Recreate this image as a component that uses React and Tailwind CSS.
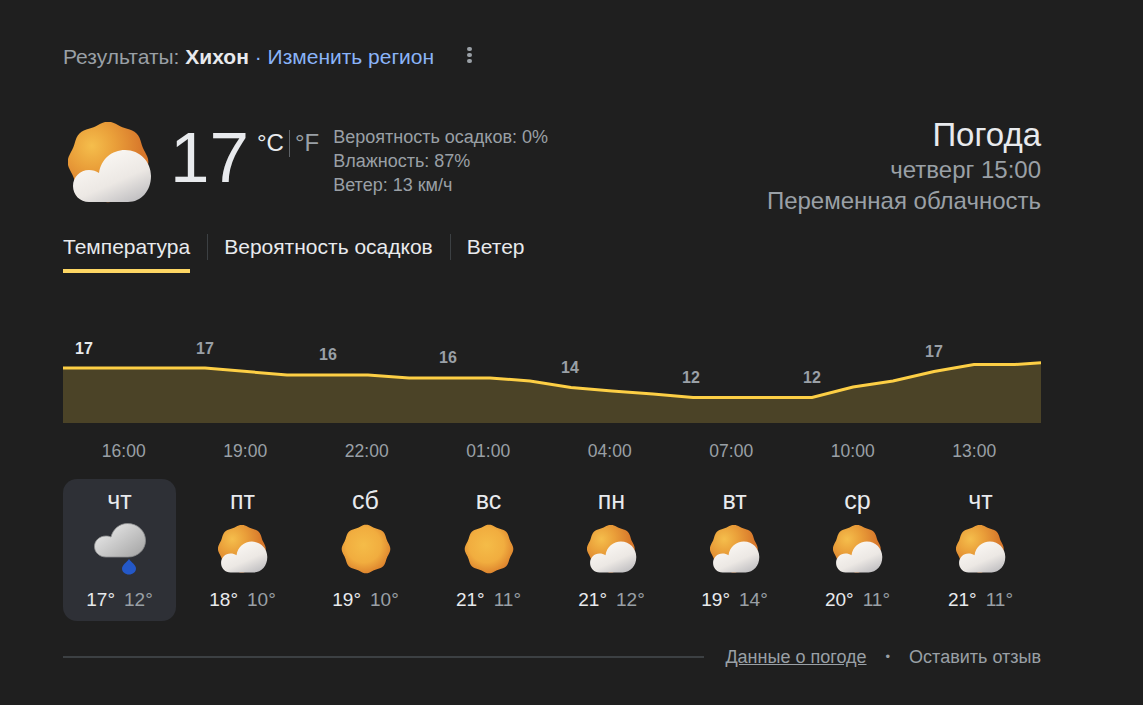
import React from 'react';

const chartPoints = [
  [0, 368], [142, 368], [224, 375], [305, 375], [346, 378], [427, 378], [467, 381], [508, 387.5],
  [549, 391], [590, 394], [630, 397.5], [749, 397.5], [790, 387], [830, 381], [871, 371.5],
  [911, 364.5], [952, 364.5], [978, 362.7],
];

const chartLabels = [
  [21, 354, '17', true], [142, 354, '17'], [265, 360, '16'], [385, 363, '16'],
  [507, 373, '14'], [628, 383, '12'], [749, 383, '12'], [871, 357, '17'],
];

const hours = ['16:00', '19:00', '22:00', '01:00', '04:00', '07:00', '10:00', '13:00'];

const days = [
  { name: 'чт', icon: 'rain', hi: 17, lo: 12, active: true },
  { name: 'пт', icon: 'partly', hi: 18, lo: 10 },
  { name: 'сб', icon: 'sun', hi: 19, lo: 10 },
  { name: 'вс', icon: 'sun', hi: 21, lo: 11 },
  { name: 'пн', icon: 'partly', hi: 21, lo: 12 },
  { name: 'вт', icon: 'partly', hi: 19, lo: 14 },
  { name: 'ср', icon: 'partly', hi: 20, lo: 11 },
  { name: 'чт', icon: 'partly', hi: 21, lo: 11 },
];

// bumpy sun outline, 8 lobes
function sunPath(cx, cy, r) {
  const pts = [];
  for (let i = 0; i < 96; i++) {
    const a = (i / 96) * Math.PI * 2;
    const rr = r * (1 + 0.035 * Math.cos(a * 8));
    pts.push(`${(cx + rr * Math.sin(a)).toFixed(2)} ${(cy - rr * Math.cos(a)).toFixed(2)}`);
  }
  return 'M' + pts.join('L') + 'Z';
}

function PartlyCloudy({ id, className }) {
  return (
    <svg viewBox="0 0 84 81" className={className}>
      <defs>
        <radialGradient id={`${id}s`} cx="0.3" cy="0.3" r="0.62">
          <stop offset="0" stopColor="#f5be4c" />
          <stop offset="0.45" stopColor="#eaa03a" />
          <stop offset="1" stopColor="#d8782b" />
        </radialGradient>
        <linearGradient id={`${id}c`} x1="0.25" y1="0.1" x2="0.85" y2="1">
          <stop offset="0" stopColor="#fbf8f4" />
          <stop offset="0.55" stopColor="#ece8e4" />
          <stop offset="1" stopColor="#bdbcbf" />
        </linearGradient>
      </defs>
      <path d={sunPath(40, 40, 39)} fill={`url(#${id}s)`} />
      <path
        d="M21 80C12 80 5 73 5 64C5 55 12 48 21 48C25 48 28 49 31 51C33 37 44 28 57 28C72 28 83 40 83 54C83 69 73 80 60 80Z"
        fill={`url(#${id}c)`}
      />
    </svg>
  );
}

function Sun({ id, className }) {
  return (
    <svg viewBox="0 0 50 50" className={className}>
      <defs>
        <radialGradient id={id} cx="0.45" cy="0.42" r="0.6">
          <stop offset="0" stopColor="#f5bc48" />
          <stop offset="0.6" stopColor="#f1ad3f" />
          <stop offset="1" stopColor="#dc812c" />
        </radialGradient>
      </defs>
      <path d={sunPath(25, 25, 23.5)} fill={`url(#${id})`} />
    </svg>
  );
}

function RainCloud({ id, className }) {
  return (
    <svg viewBox="0 0 52 52" className={className}>
      <defs>
        <linearGradient id={id} x1="0.1" y1="0.2" x2="0.9" y2="0.9">
          <stop offset="0" stopColor="#e6e6e6" />
          <stop offset="1" stopColor="#a9a9a9" />
        </linearGradient>
      </defs>
      <path
        d="M12 34C5.500 34 0.500 29.500 0.500 23.500C0.500 17.500 5.500 13 12 13C14 13 15.500 13.300 17 14C19 6 25.500 0.500 33.500 0.500C43.500 0.500 51.500 8 51.500 17.500C51.500 27 43.500 34 34 34Z"
        fill={`url(#${id})`}
        stroke="#8f9092"
        strokeWidth="0.8"
      />
      <path d="M35 36C37 39 42 42 42 45.500C42 49 38.800 51.500 35 51.500C31.200 51.500 28 49 28 45.500C28 42 33 39 35 36Z" fill="#2458c8" />
    </svg>
  );
}

function DayIcon({ type, id }) {
  if (type === 'rain') return <RainCloud id={id} className="w-[52px] h-[52px]" />;
  if (type === 'sun') return <Sun id={id} className="w-[50px] h-[50px]" />;
  return <PartlyCloudy id={id} className="w-[50px] h-[48px]" />;
}

function Chart() {
  const line = chartPoints.map((p) => p.join(' ')).join('L');
  return (
    <svg viewBox="0 325 978 98" className="block w-[978px] h-[98px]">
      <path d={`M${line}L978 423L0 423Z`} fill="#4b4327" />
      <path d={`M${line}`} fill="none" stroke="#fdcf45" strokeWidth="3" />
      {chartLabels.map(([x, y, t, on]) => (
        <text key={x} x={x} y={y} textAnchor="middle" fontSize="16" fontWeight="700" fill={on ? '#e8eaed' : '#9aa0a6'}>
          {t}
        </text>
      ))}
    </svg>
  );
}

export default function App() {
  return (
    <div className="min-h-[705px] bg-[#1f1f1f] pl-[63px] pt-[44px] font-['Liberation_Sans',Arial,sans-serif] text-[#e8eaed]">
      <div className="w-[978px]">
        {/* location line */}
        <div className="flex items-center h-[26px] text-[21px] leading-[26px] text-[#9aa0a6]">
          <span>Результаты:&nbsp;</span>
          <span className="font-bold text-[#e8eaed]">Хихон</span>
          <span className="text-[#8ab4f8]">&nbsp;· Изменить регион</span>
          <span className="ml-[33px] mb-[4px] flex flex-col gap-[1.500px]">
            <span className="w-[4.500px] h-[4.500px] rounded-full bg-[#9aa0a6]"></span>
            <span className="w-[4.500px] h-[4.500px] rounded-full bg-[#9aa0a6]"></span>
            <span className="w-[4.500px] h-[4.500px] rounded-full bg-[#9aa0a6]"></span>
          </span>
        </div>

        {/* current conditions */}
        <div className="flex justify-between mt-[52px] h-[88px]">
          <div className="flex items-start">
            <PartlyCloudy id="main" className="ml-[5px] w-[84px] h-[81px]" />
            <div className="ml-[18px] mt-[-8px] text-[71px] leading-[88px] w-[87px]">17</div>
            <div className="flex items-center h-[28px] mt-[7px] text-[24px] leading-[28px]">
              <span>°C</span>
              <span className="mx-[5px] w-px h-[27px] bg-[#5f6368]"></span>
              <span className="text-[#9aa0a6]">°F</span>
            </div>
            <div className="ml-[14px] mt-[3px] text-[18px] leading-[24px] text-[#9aa0a6]">
              <div>Вероятность осадков: 0%</div>
              <div>Влажность: 87%</div>
              <div>Ветер: 13 км/ч</div>
            </div>
          </div>
          <div className="text-right text-[#9aa0a6] text-[24px] leading-[31px] mt-[-6px]">
            <div className="text-[33px] leading-[38px] text-[#e8eaed]">Погода</div>
            <div>четверг 15:00</div>
            <div>Переменная облачность</div>
          </div>
        </div>

        {/* tabs */}
        <div className="flex items-start mt-[22px] h-[46px] text-[21px] leading-[26px]">
          <div className="pt-[2px] h-[41px] border-b-[4px] border-[#fdd663]">Температура</div>
          <div className="ml-[17px] mr-[16px] mt-[2px] w-px h-[26px] bg-[#3c4043]"></div>
          <div className="pt-[2px]">Вероятность осадков</div>
          <div className="ml-[17px] mr-[16px] mt-[2px] w-px h-[26px] bg-[#3c4043]"></div>
          <div className="pt-[2px]">Ветер</div>
        </div>

        <div className="mt-[47px]">
          <Chart />
        </div>

        <div className="grid grid-cols-8 w-[972px] mt-[16px] text-[17.500px] leading-[24px] text-[#9aa0a6]">
          {hours.map((h) => (
            <div key={h} className="text-center">{h}</div>
          ))}
        </div>

        {/* week */}
        <div className="grid grid-cols-[repeat(8,113px)] gap-x-[10px] mt-[16px]">
          {days.map((d, i) => (
            <div
              key={i}
              className={`flex flex-col items-center h-[142px] rounded-[14px] pt-[7px] ${d.active ? 'bg-[#2e3036]' : ''}`}
            >
              <div className="text-[25px] leading-[28px]">{d.name}</div>
              <div className="flex items-center justify-center h-[52px] mt-[9px]">
                <DayIcon type={d.icon} id={`d${i}`} />
              </div>
              <div className="mt-[12px] text-[19px] leading-[26px] whitespace-nowrap">
                <span>{d.hi}°</span>
                <span className="ml-[9px] text-[#9aa0a6]">{d.lo}°</span>
              </div>
            </div>
          ))}
        </div>

        {/* footer */}
        <div className="flex items-center mt-[24px] text-[18px] leading-[24px] text-[#9aa0a6]">
          <div className="flex-1 h-[2px] bg-[#3c4043]"></div>
          <a className="ml-[21px] underline">Данные о погоде</a>
          <span className="mx-[19px] text-[13px]">•</span>
          <span>Оставить отзыв</span>
        </div>
      </div>
    </div>
  );
}
